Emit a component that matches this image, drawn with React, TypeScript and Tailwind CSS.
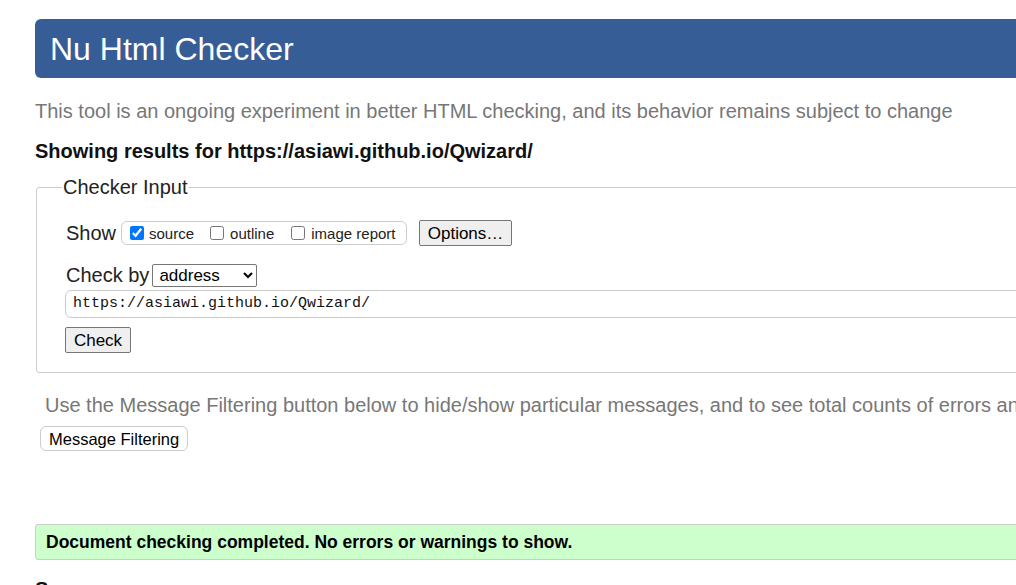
import React from 'react';

const App: React.FC = () => {
  return (
    <div className="w-[1016px] h-[585px] overflow-hidden bg-white font-['Liberation_Sans',Arial,sans-serif]">
      <div className="ml-[35px] w-[1120px] pt-[19px]">
        <header className="h-[59px] rounded-[6px] bg-[#365d95] flex items-center px-[15px]">
          <h1 className="text-[32px] text-white leading-none">Nu Html Checker</h1>
        </header>

        <p className="mt-[22px] text-[20px] leading-[22px] text-[#777] whitespace-nowrap">
          This tool is an ongoing experiment in better HTML checking, and its behavior remains subject to change
        </p>
        <p className="mt-[18px] text-[20px] leading-[22px] font-bold text-[#111]">
          Showing results for https://asiawi.github.io/Qwizard/
        </p>

        <fieldset className="mt-[14px] ml-px border border-[#ccc] rounded-[3px] pl-[29px] pr-4 pt-[20px] pb-[19px]">
          <legend className="px-[1px] -ml-[4px] text-[20px] leading-[22px] text-[#222]">Checker Input</legend>
          <div className="flex items-center">
            <span className="text-[20px] text-[#222] mr-[5px]">Show</span>
            <div className="h-[24px] w-[286px] border border-[#ccc] rounded-[6px] flex items-center pl-[8px] text-[15px] text-[#222]">
              <label className="flex items-center">
                <input type="checkbox" defaultChecked className="w-[14px] h-[14px] m-0 accent-[#0075ff]" />
                <span className="ml-[5px] mt-[3px]">source</span>
              </label>
              <label className="flex items-center ml-[16px]">
                <input type="checkbox" className="w-[14px] h-[14px] m-0" />
                <span className="ml-[6px] mt-[3px]">outline</span>
              </label>
              <label className="flex items-center ml-[17px]">
                <input type="checkbox" className="w-[14px] h-[14px] m-0" />
                <span className="ml-[6px] mt-[3px]">image report</span>
              </label>
            </div>
            <button className="ml-[12px] h-[26px] w-[93px] border border-[#767676] rounded-[2px] bg-[#efefef] text-[17px] text-black">
              Options…
            </button>
          </div>

          <div className="flex items-center mt-[12px]">
            <span className="text-[20px] text-[#222] mr-[3px]">Check by</span>
            <select className="h-[23px] w-[105px] border border-[#767676] rounded-[2px] text-[17px] text-black pl-[2px] bg-white">
              <option>address</option>
            </select>
          </div>
          <div className="-ml-px h-[28px] border border-[#ccc] rounded-[6px] flex items-center pl-[7px] font-['Liberation_Mono','DejaVu_Sans_Mono',monospace] text-[15px] text-[#111]">
            https://asiawi.github.io/Qwizard/
          </div>
          <button className="mt-[9px] -ml-px h-[26px] w-[66px] border border-[#767676] rounded-[2px] bg-[#efefef] text-[17px] text-black">
            Check
          </button>
        </fieldset>

        <p className="mt-[21px] ml-[10px] text-[20px] leading-[22px] text-[#777] whitespace-nowrap">
          Use the Message Filtering button below to hide/show particular messages, and to see total counts of errors and warnings.
        </p>
        <button className="mt-[10px] ml-[5px] h-[25px] px-[8px] border border-[#ccc] rounded-[6px] bg-white text-[16.5px] text-black">
          Message Filtering
        </button>

        <div className="mt-[72px] h-[36px] border border-[#ccc] rounded-[3px] bg-[#ccffcc] flex items-center pl-[10px]">
          <p className="text-[17.5px] font-bold text-black">Document checking completed. No errors or warnings to show.</p>
        </div>

        <h2 className="mt-[14px] text-[20px] font-bold text-[#111]">Source</h2>
      </div>
    </div>
  );
};

export default App;
